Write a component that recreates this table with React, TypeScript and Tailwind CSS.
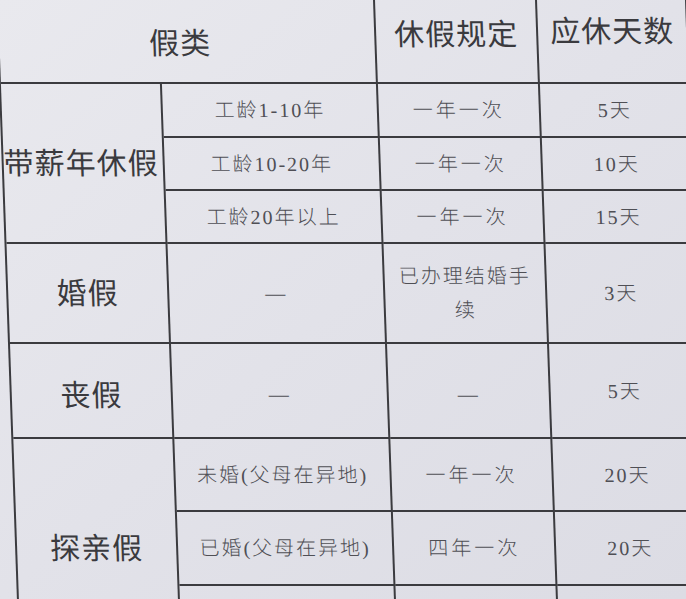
import React from 'react';

const serif = { fontFamily: '"Liberation Serif", "Noto Sans CJK SC", serif' };

const Cell = ({
  children,
  className = '',
}: {
  children?: React.ReactNode;
  className?: string;
}) => (
  <div
    className={`flex items-center justify-center border-r-2 border-b-2 border-[#3b3b3f] text-center ${className}`}
  >
    {children}
  </div>
);

const big = 'text-[30px] text-[#3a3a3e] tracking-[1px]';
const small = 'text-[20px] text-[#4f4f55] tracking-[2px] font-light';
const rule = 'text-[20px] text-[#4f4f55] tracking-[3px] font-light';

export default function App() {
  const rows = [
    { cond: '工龄1-10年', rule: '一年一次', days: '5天' },
    { cond: '工龄10-20年', rule: '一年一次', days: '10天' },
    { cond: '工龄20年以上', rule: '一年一次', days: '15天' },
  ];

  return (
    <div
      className="w-[686px] h-[599px] overflow-hidden bg-gradient-to-br from-[#e9e9ee] via-[#e2e2e9] to-[#dcdce4]"
      style={serif}
    >
      <div className="origin-top-left skew-x-[2deg] -ml-[4px]">
        <div className="grid grid-cols-[161px_216px_162px_150px] grid-rows-[84px_54px_53px_53px_100px_95px_73px_74px_74px] border-l-2 border-[#3b3b3f]">
          <Cell className={`col-span-2 pt-[4px] pr-[14px] ${big}`}>假类</Cell>
          <Cell className={`pb-[14px] ${big}`}>休假规定</Cell>
          <Cell className={`pb-[20px] ${big}`}>应休天数</Cell>

          <Cell className={`row-span-3 ${big} tracking-[0px] pr-[4px]`}>带薪年休假</Cell>
          {rows.map((r) => (
            <React.Fragment key={r.cond}>
              <Cell className={small}>{r.cond}</Cell>
              <Cell className={rule}>{r.rule}</Cell>
              <Cell className={small}>{r.days}</Cell>
            </React.Fragment>
          ))}

          <Cell className={big}>婚假</Cell>
          <Cell className={small}>—</Cell>
          <Cell className={`${small} px-[12px] leading-[34px]`}>已办理结婚手续</Cell>
          <Cell className={small}>3天</Cell>

          <Cell className={`${big} pt-[10px]`}>丧假</Cell>
          <Cell className={`${small} pt-[6px]`}>—</Cell>
          <Cell className={`${small} pt-[6px]`}>—</Cell>
          <Cell className={small}>5天</Cell>

          <Cell className={`row-span-3 ${big}`}>探亲假</Cell>
          <Cell className={`${small} tracking-[1px]`}>未婚(父母在异地)</Cell>
          <Cell className={rule}>一年一次</Cell>
          <Cell className={small}>20天</Cell>
          <Cell className={`${small} tracking-[1px]`}>已婚(父母在异地)</Cell>
          <Cell className={rule}>四年一次</Cell>
          <Cell className={small}>20天</Cell>
          <Cell className={small} />
          <Cell className={small} />
          <Cell className={small} />
        </div>
      </div>
    </div>
  );
}
